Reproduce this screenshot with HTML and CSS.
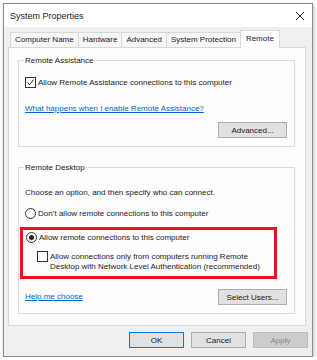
FILE: index.html
```html
<!DOCTYPE html>
<html lang="en">
<head>
    <meta charset="UTF-8">
    <title>System Properties</title>
    <link rel="stylesheet" href="styles.css">
</head>
<body>

<div class="window">
    <div class="titlebar">
        <span class="title">System Properties</span>
        <svg class="close" width="10" height="10" viewBox="0 0 10 10">
            <path d="M1 1 L9 9 M9 1 L1 9" stroke="#222" stroke-width="1" fill="none"/>
        </svg>
    </div>

    <div class="body">
        <div class="tabs">
            <div class="tab">Computer Name</div>
            <div class="tab">Hardware</div>
            <div class="tab">Advanced</div>
            <div class="tab">System Protection</div>
            <div class="tab active">Remote</div>
        </div>

        <div class="panel">
            <fieldset class="group assist">
                <legend>Remote Assistance</legend>
                <div class="option">
                    <span class="box checked">
                        <svg width="9" height="9" viewBox="0 0 9 9">
                            <path d="M1.5 4.5 L3.6 6.8 L7.6 1.6" stroke="#222" stroke-width="1" fill="none"/>
                        </svg>
                    </span>
                    <span>Allow Remote Assistance connections to this computer</span>
                </div>
                <a href="#" class="link help-ra">What happens when I enable Remote Assistance?</a>
                <div class="btn-row">
                    <button class="btn">Advanced...</button>
                </div>
            </fieldset>

            <fieldset class="group desktop">
                <legend>Remote Desktop</legend>
                <p class="intro">Choose an option, and then specify who can connect.</p>
                <div class="option">
                    <span class="radio"></span>
                    <span>Don’t allow remote connections to this computer</span>
                </div>
                <div class="highlight">
                    <div class="option">
                        <span class="radio on"></span>
                        <span>Allow remote connections to this computer</span>
                    </div>
                    <div class="option nla">
                        <span class="box"></span>
                        <span>Allow connections only from computers running Remote<br>Desktop with Network Level Authentication (recommended)</span>
                    </div>
                </div>
                <div class="btn-row split">
                    <a href="#" class="link">Help me choose</a>
                    <button class="btn">Select Users...</button>
                </div>
            </fieldset>
        </div>

        <div class="footer">
            <button class="btn default">OK</button>
            <button class="btn">Cancel</button>
            <button class="btn disabled">Apply</button>
        </div>
    </div>
</div>

</body>
</html>
```

FILE: styles.css
```css
body {
    margin: 0;
    background: #ffffff;
    font-family: 'Liberation Sans', Arial, sans-serif;
    font-size: 8px;
    color: #1a1a1a;
}
.window {
    margin: 3px 0 0 3px;
    width: 310px;
    height: 354px;
    box-sizing: border-box;
    border: 1px solid #8c8c8c;
    background: #f0eff0;
    box-shadow: 1px 2px 4px rgba(0, 0, 0, 0.25);
}
.titlebar {
    height: 23px;
    background: #ffffff;
    display: flex;
    align-items: center;
    justify-content: space-between;
    padding: 0 6px 0 6px;
}
.title {
    font-size: 9px;
    color: #222;
}
.close {
    margin-right: 1px;
}
.body {
    padding: 5px 4px 0 4px;
}
.tabs {
    display: flex;
    height: 15px;
    padding-left: 2px;
    position: relative;
    z-index: 1;
}
.tab {
    height: 15px;
    box-sizing: border-box;
    padding: 0 4px;
    line-height: 14px;
    border: 1px solid #d9d9d9;
    border-bottom: none;
    margin-right: -1px;
    background: #f7f6f7;
    color: #222;
}
.tab.active {
    height: 18px;
    margin-top: -2px;
    background: #ffffff;
    padding: 0 5px;
    line-height: 15px;
}
.panel {
    width: 298px;
    height: 279px;
    box-sizing: border-box;
    border: 1px solid #d9d9d9;
    background: #fdfdfd;
    padding: 7px 10px 0 9px;
}
.group {
    margin: 0;
    border: 1px solid #dcdcdc;
    padding: 0 7px 0 6px;
    min-width: 0;
}
.group legend {
    padding: 0 1px;
    margin-left: -1px;
    line-height: 11px;
}
.assist {
    height: 92px;
    box-sizing: border-box;
}
.option {
    display: flex;
    align-items: flex-start;
    line-height: 10px;
}
.assist .option {
    margin-top: 12px;
}
.box {
    width: 11px;
    height: 11px;
    box-sizing: border-box;
    border: 1px solid #333;
    background: #fff;
    margin-right: 2px;
    margin-top: -1px;
    display: flex;
    align-items: center;
    justify-content: center;
    flex-shrink: 0;
}
.radio {
    width: 11px;
    height: 11px;
    box-sizing: border-box;
    border: 1px solid #333;
    border-radius: 50%;
    background: #fff;
    margin-right: 2px;
    margin-top: -1px;
    flex-shrink: 0;
    position: relative;
}
.radio.on::after {
    content: "";
    position: absolute;
    left: 2px;
    top: 2px;
    width: 5px;
    height: 5px;
    border-radius: 50%;
    background: #222;
}
.link {
    display: block;
    color: #0066cc;
    text-decoration: underline;
    line-height: 10px;
}
.help-ra {
    margin-top: 16px;
}
.btn-row {
    display: flex;
    justify-content: flex-end;
    margin-top: 8px;
}
.btn-row.split {
    justify-content: space-between;
    align-items: center;
}
.btn {
    font-family: inherit;
    font-size: 8px;
    color: #1a1a1a;
    width: 69px;
    height: 16px;
    padding: 0;
    border: 1px solid #adadad;
    background: #e1e1e1;
}
.desktop {
    margin-top: 15px;
    height: 152px;
    box-sizing: border-box;
}
.intro {
    margin: 15px 0 0 0;
    line-height: 10px;
}
.desktop > .option {
    margin-top: 11px;
}
.highlight {
    margin: 8px 10px 0 -5px;
    border: 3px solid #e8111e;
    padding: 3px 0 4px 3px;
}
.nla {
    margin: 9px 0 0 11px;
}
.desktop .btn-row {
    margin-top: 10px;
}
.footer {
    display: flex;
    justify-content: flex-end;
    gap: 7px;
    margin-top: 6px;
}
.footer .btn {
    width: 55px;
}
.btn.default {
    border-color: #0078d7;
}
.btn.disabled {
    background: #cccccc;
    border-color: #bfbfbf;
    color: #8a8a8a;
}
```
